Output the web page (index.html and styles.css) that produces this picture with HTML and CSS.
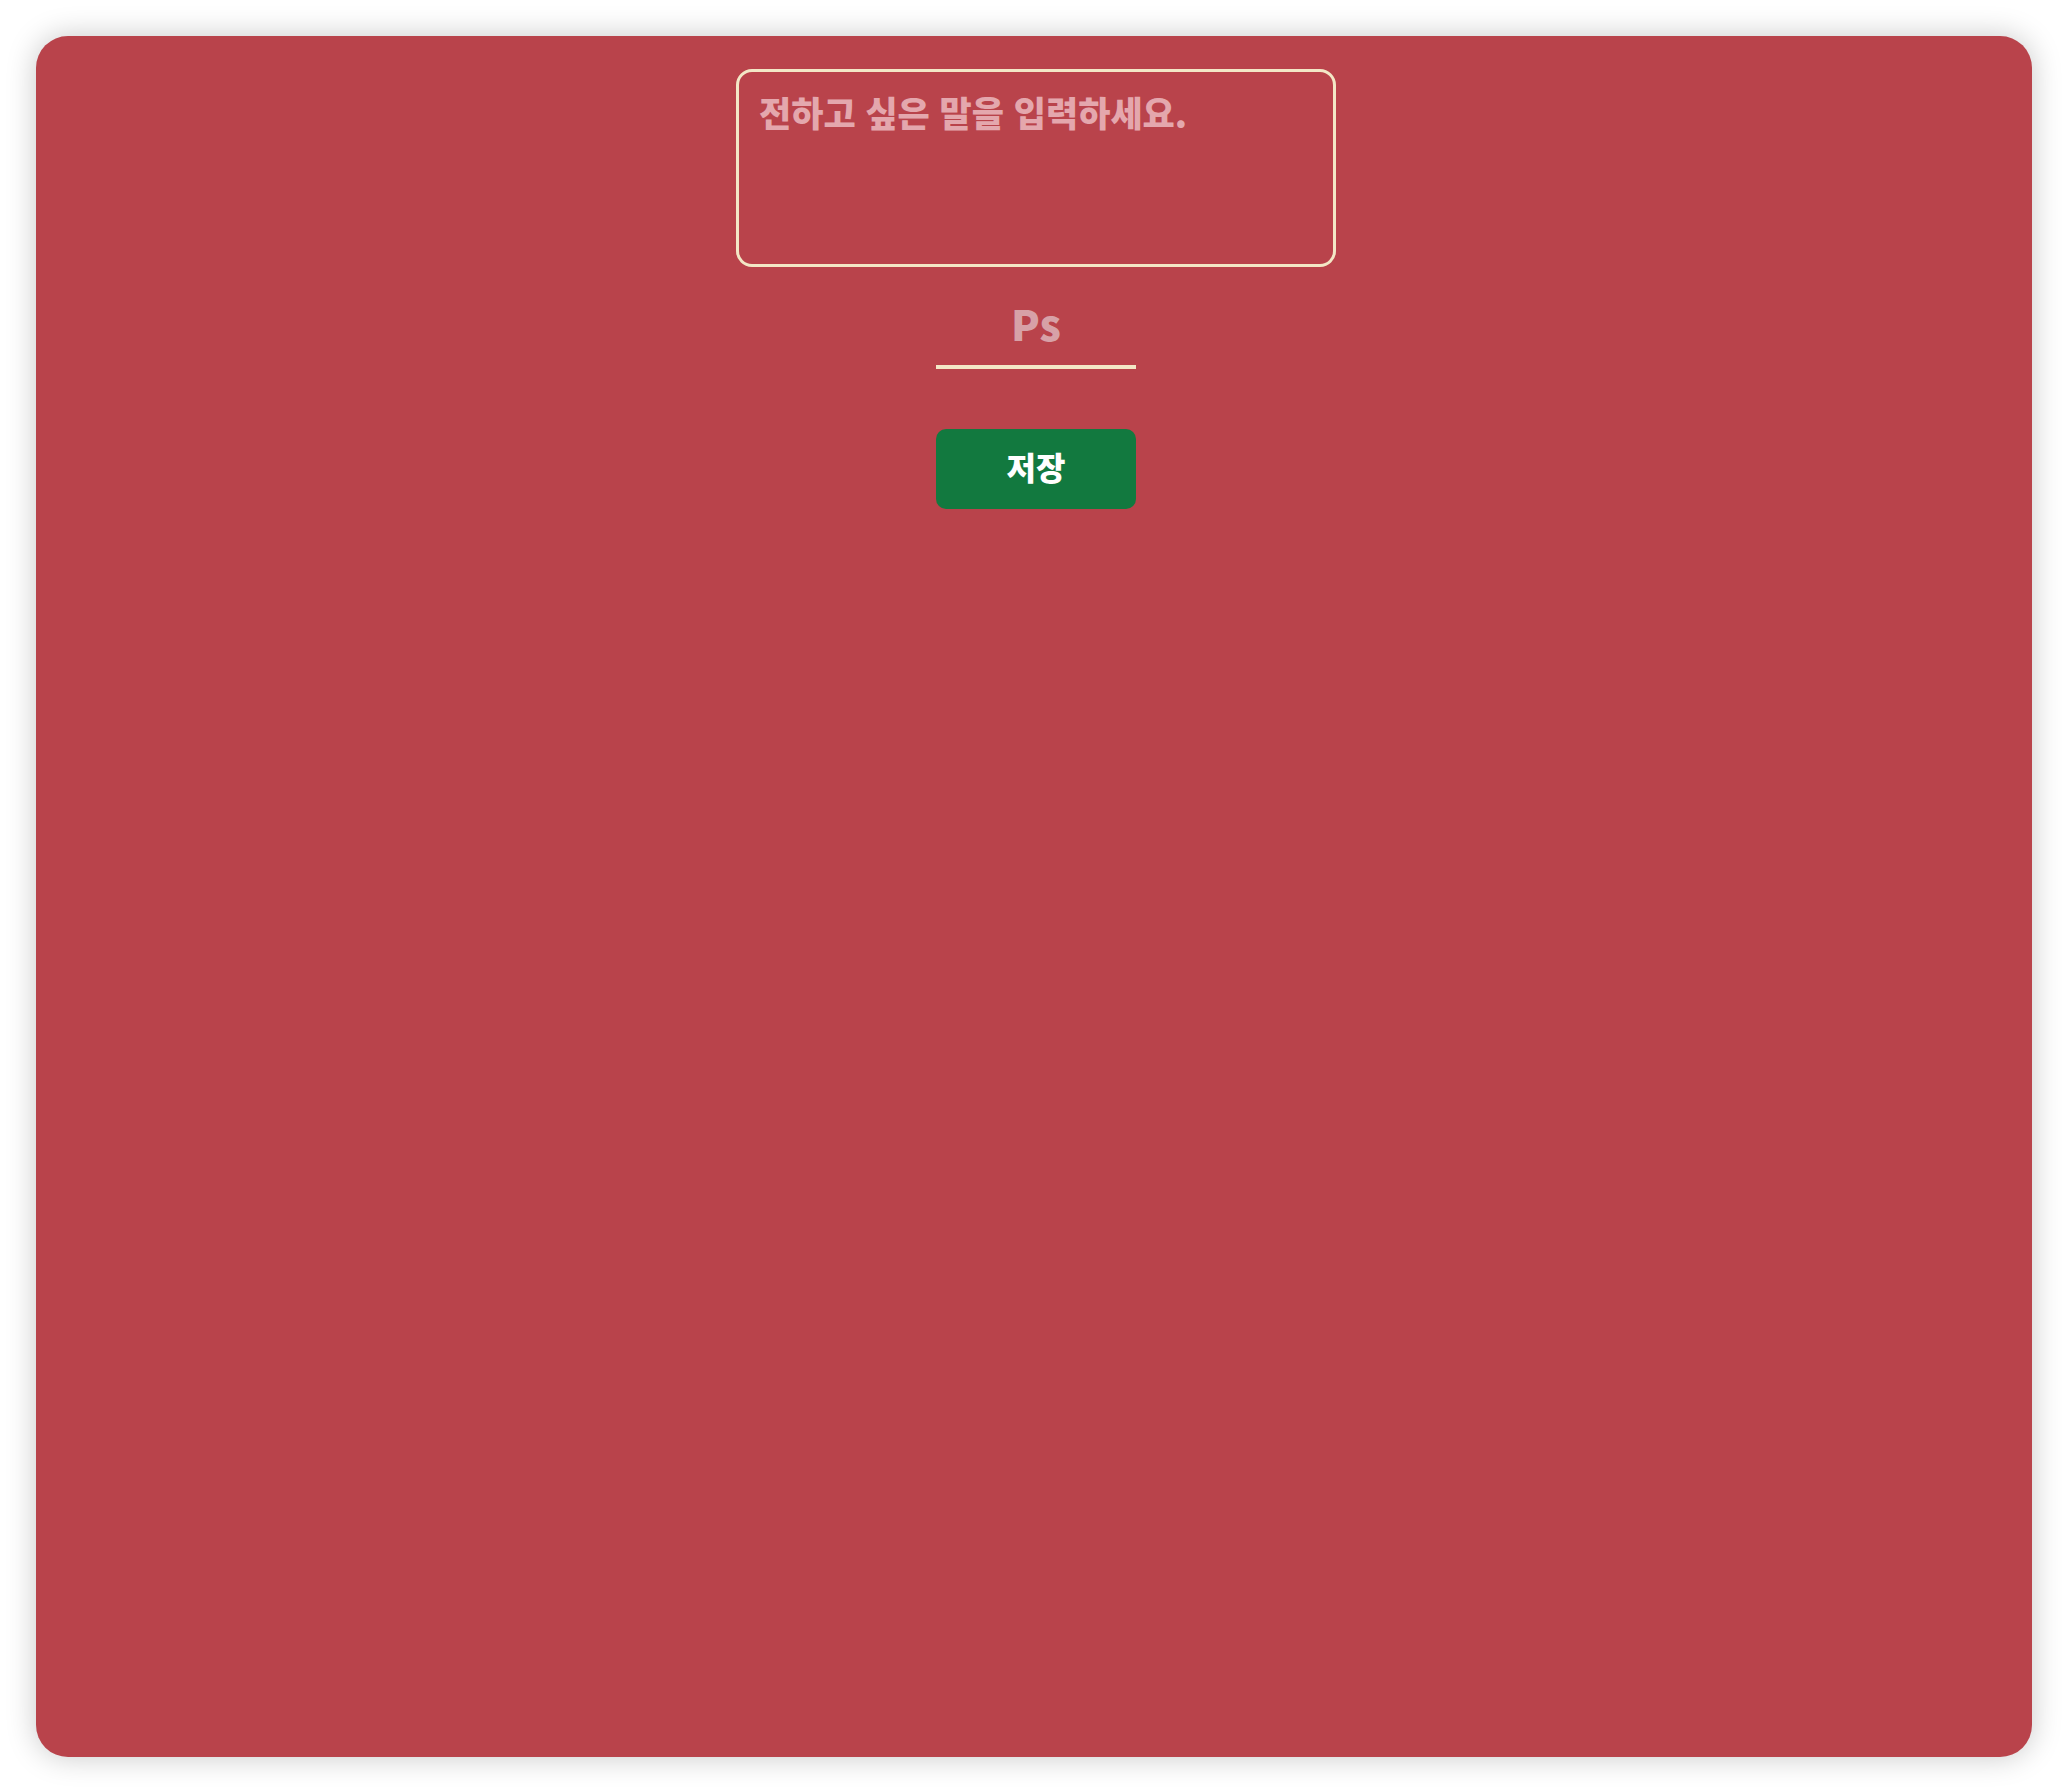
FILE: index.html
```html
<!DOCTYPE html>
<html lang="ko">
<head>
<meta charset="utf-8">
<title>메시지</title>
<link rel="stylesheet" href="styles.css">
</head>
<body>
<div class="page">
  <div class="card">
    <textarea class="message" placeholder="전하고 싶은 말을 입력하세요."></textarea>
    <input class="sign" type="text" placeholder="Ps">
    <button class="save" type="button">저장</button>
  </div>
</div>
</body>
</html>
```
FILE: styles.css
```css
html, body {
  margin: 0;
  padding: 0;
  background: #ffffff;
}
.page {
  box-sizing: border-box;
  height: 100vh;
  padding: 36px 36px 35px 36px;
}
.card {
  box-sizing: border-box;
  height: 100%;
  background: #b9434b;
  border-radius: 32px;
  box-shadow: 0 0 30px rgba(0, 0, 0, 0.22);
  display: flex;
  flex-direction: column;
  align-items: center;
  padding-top: 33px;
  padding-left: 4px;
  font-family: "Noto Sans CJK KR", "Noto Sans", sans-serif;
}
.message {
  box-sizing: border-box;
  width: 600px;
  height: 198px;
  border: 3px solid #f3e7c6;
  border-radius: 16px;
  background: transparent;
  padding: 15px 20px;
  resize: none;
  outline: none;
  font-family: "Noto Sans CJK KR", "Noto Sans", sans-serif;
  font-weight: 900;
  font-size: 35px;
  line-height: 1.4;
  color: #fff;
  letter-spacing: 0;
}
.message::placeholder {
  color: #e4a7ad;
}
.sign {
  box-sizing: border-box;
  width: 200px;
  height: 80px;
  margin-top: 22px;
  border: none;
  border-bottom: 4px solid #f3e7c6;
  background: transparent;
  outline: none;
  text-align: center;
  font-family: "Noto Sans CJK KR", "Noto Sans", sans-serif;
  font-weight: 900;
  font-size: 42px;
  color: #fff;
  padding: 0 0 10px 0;
}
.sign::placeholder {
  color: #d7a1a7;
}
.save {
  box-sizing: border-box;
  width: 200px;
  height: 80px;
  margin-top: 60px;
  border: none;
  border-radius: 10px;
  background: #12793f;
  color: #ffffff;
  font-family: "Noto Sans CJK KR", "Noto Sans", sans-serif;
  font-weight: 900;
  font-size: 32px;
  padding: 0 0 6px 0;
}
```
